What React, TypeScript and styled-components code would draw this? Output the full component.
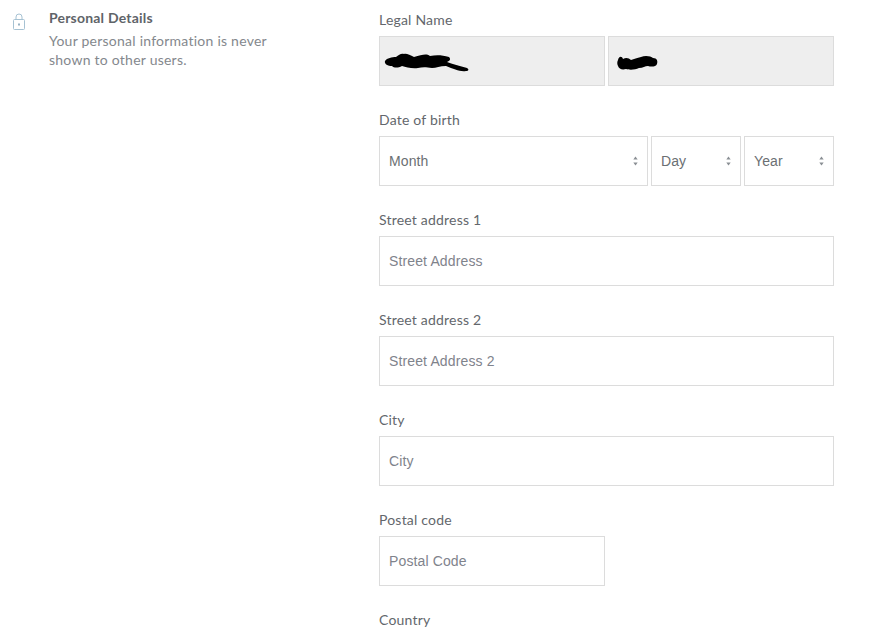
import styled, { createGlobalStyle } from "styled-components";

const GlobalStyle = createGlobalStyle`
  html, body {
    margin: 0;
    padding: 0;
    height: 100%;
    overflow: hidden;
    background: #fff;
  }
`;

function LockIcon() {
  return (
    <svg width="14" height="18" viewBox="0 0 14 18" fill="none" stroke="#a6c2d3" strokeWidth="1">
      <rect x="1.5" y="6.5" width="11" height="10" rx="1" />
      <path d="M4 6.5V4a3 3 0 0 1 6 0v2.5" />
      <path d="M7 10.5v2" strokeWidth="1.6" stroke="#7f9fb3" />
    </svg>
  );
}

function Arrows() {
  return (
    <ArrowBox width="5" height="10" viewBox="0 0 5 10" fill="#8a8f94">
      <path d="M2.5 0.5 L4.7 3.6 H0.3 Z" />
      <path d="M2.5 9.5 L4.7 6.4 H0.3 Z" />
    </ArrowBox>
  );
}

function SelectBox({ label, width }: { label: string; width: number }) {
  return (
    <SelectWrap $width={width}>
      <StyledSelect defaultValue="">
        <option value="">{label}</option>
      </StyledSelect>
      <Arrows />
    </SelectWrap>
  );
}

function Field({ label, placeholder, short }: { label: string; placeholder: string; short?: boolean }) {
  return (
    <FieldBlock>
      <Label>{label}</Label>
      <TextInput placeholder={placeholder} $short={short} />
    </FieldBlock>
  );
}

export default function App() {
  return (
    <>
      <GlobalStyle />
      <Page>
        <Aside>
          <IconSlot>
            <LockIcon />
          </IconSlot>
          <AsideText>
            <Heading>Personal Details</Heading>
            <Description>
              Your personal information is never
              <br />
              shown to other users.
            </Description>
          </AsideText>
        </Aside>
        <Form>
          <FieldBlock>
            <Label>Legal Name</Label>
            <Row>
              <DisabledBox $width={226}>
                <Scribble width="88" height="20" viewBox="0 0 88 20" fill="#000">
                  <path d="M1 9 C3 6 8 5 12 5 C15 3 17 1 20 2 C22 1 26 3 30 5 C38 3 42 1 46 4 C52 3 58 3 65 5 C67 7 66 9 63 10 C68 12 76 14 83 16 C85 17 85 19 82 19 C76 20 70 17 62 14 C56 14 52 16 48 16 C42 15 38 15 34 16 C28 17 22 15 18 14 C14 16 10 16 8 14 C4 14 0 12 1 9 Z" />
                </Scribble>
              </DisabledBox>
              <DisabledBox $width={226}>
                <Scribble width="46" height="20" viewBox="0 0 46 20" fill="#000">
                  <path d="M5 8 C6 4 9 4 10 7 C13 5 16 6 18 8 C21 7 24 6 28 5 C32 3 38 4 40 6 C44 6 45 9 44 12 C43 15 38 15 35 14 C32 14 30 16 26 16 C22 18 16 18 13 17 C9 18 6 17 5 14 C4 12 4 10 5 8 Z" />
                </Scribble>
              </DisabledBox>
            </Row>
          </FieldBlock>
          <FieldBlock>
            <Label>Date of birth</Label>
            <Row>
              <SelectBox label="Month" width={269} />
              <SelectBox label="Day" width={90} />
              <SelectBox label="Year" width={90} />
            </Row>
          </FieldBlock>
          <Field label="Street address 1" placeholder="Street Address" />
          <Field label="Street address 2" placeholder="Street Address 2" />
          <Field label="City" placeholder="City" />
          <Field label="Postal code" placeholder="Postal Code" short />
          <FieldBlock>
            <Label>Country</Label>
          </FieldBlock>
        </Form>
      </Page>
    </>
  );
}

const Page = styled.div`
  display: flex;
  width: 881px;
  height: 627px;
  overflow: hidden;
  background: #fff;
  font-family: Lato, "Liberation Sans", sans-serif;
`;
const Aside = styled.div`
  width: 379px;
  flex-shrink: 0;
  display: flex;
  padding: 10px 0 0 12px;
  box-sizing: border-box;
`;
const IconSlot = styled.div`
  width: 37px;
  flex-shrink: 0;
  padding-top: 3px;
`;
const AsideText = styled.div`
  display: flex;
  flex-direction: column;
`;
const Heading = styled.div`
  font-size: 14px;
  line-height: 16px;
  font-weight: 700;
  letter-spacing: 0.2px;
  color: #5f6469;
`;
const Description = styled.div`
  margin-top: 5px;
  font-size: 14px;
  line-height: 19px;
  letter-spacing: 0.24px;
  color: #84888d;
`;
const Form = styled.div`
  width: 455px;
  display: flex;
  flex-direction: column;
  padding-top: 12px;
`;
const FieldBlock = styled.div`
  height: 100px;
  flex-shrink: 0;
`;
const Label = styled.div`
  height: 24px;
  font-size: 14px;
  line-height: 16px;
  letter-spacing: 0.2px;
  color: #63676c;
`;
const Row = styled.div`
  display: flex;
  gap: 3px;
`;
const DisabledBox = styled.div<{ $width: number }>`
  width: ${(p) => p.$width}px;
  height: 50px;
  box-sizing: border-box;
  display: flex;
  align-items: center;
  padding-left: 4px;
  background: #eeeeee;
  border: 1px solid #dcdcdc;
`;
const Scribble = styled.svg`
  display: block;
  margin-top: 2px;
`;
const SelectWrap = styled.div<{ $width: number }>`
  position: relative;
  width: ${(p) => p.$width}px;
  height: 50px;
`;
const StyledSelect = styled.select`
  appearance: none;
  width: 100%;
  height: 100%;
  box-sizing: border-box;
  padding: 0 9px;
  background: #fff;
  border: 1px solid #dcdcdc;
  border-radius: 0;
  font-family: "Liberation Sans", Arial, sans-serif;
  font-size: 14px;
  letter-spacing: 0.1px;
  color: #6b6f73;
`;
const ArrowBox = styled.svg`
  position: absolute;
  right: 10px;
  top: 20px;
`;
const TextInput = styled.input<{ $short?: boolean }>`
  display: block;
  width: ${(p) => (p.$short ? "226px" : "455px")};
  height: 50px;
  box-sizing: border-box;
  padding: 0 9px;
  background: #fff;
  border: 1px solid #dcdcdc;
  border-radius: 0;
  outline: none;
  font-family: "Liberation Sans", Arial, sans-serif;
  font-size: 14px;
  letter-spacing: 0.13px;

  &::placeholder {
    color: #7f838c;
    opacity: 1;
  }
`;
